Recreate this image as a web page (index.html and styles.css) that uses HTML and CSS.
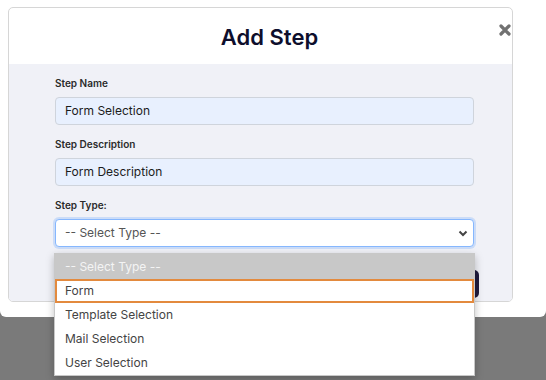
FILE: index.html
```html
<!DOCTYPE html>
<html lang="en">
<head>
    <meta charset="UTF-8">
    <meta name="viewport" content="width=device-width, initial-scale=1.0">
    <title>Add Step</title>
    <link rel="stylesheet" href="styles.css">
</head>
<body>
    <div class="modal">
        <div class="card">
            <div class="card-header">
                <h2>Add Step</h2>
                <span class="close">
                    <svg width="12" height="12" viewBox="0 0 12 12"><path d="M2 2 L10 10 M10 2 L2 10" stroke="#717171" stroke-width="3.2" stroke-linecap="round"/></svg>
                </span>
            </div>
            <div class="card-body">
                <label>Step Name</label>
                <div class="input filled">Form Selection</div>

                <label>Step Description</label>
                <div class="input filled">Form Description</div>

                <label>Step Type:</label>
                <div class="select-wrap">
                    <div class="input select">
                        <span>-- Select Type --</span>
                        <svg width="10" height="7" viewBox="0 0 10 7"><path d="M1.5 1.5 L5 5 L8.5 1.5" fill="none" stroke="#444" stroke-width="2"/></svg>
                    </div>
                    <ul class="options">
                        <li class="placeholder">-- Select Type --</li>
                        <li class="active">Form</li>
                        <li>Template Selection</li>
                        <li>Mail Selection</li>
                        <li>User Selection</li>
                    </ul>
                </div>

                <div class="footer">
                    <button class="save-btn">Save</button>
                </div>
            </div>
        </div>
    </div>
</body>
</html>
```

FILE: styles.css
```css
* { margin: 0; padding: 0; box-sizing: border-box; }
html { background: #7a7a7a; }
body {
    font-family: Inter, "Noto Sans", sans-serif;
    background: #7a7a7a;
    color: #222;
    min-height: 100vh;
    height: 380px;
}
.modal {
    background: #fff;
    height: 317px;
    padding: 7px 33px 0 8px;
    border-radius: 0 0 6px 6px;
    position: relative;
    z-index: 1;
}
.card {
    border: 1px solid #d6d6d6;
    border-radius: 5px;
    height: 295px;
    display: flex;
    flex-direction: column;
}
.card-header {
    height: 56px;
    display: flex;
    align-items: center;
    justify-content: center;
    padding-left: 18px;
    position: relative;
}
.card-header h2 {
    font-size: 22px;
    font-weight: 600;
    color: #0e0e2c;
    margin-top: 1px;
}
.close {
    position: absolute;
    right: -1px;
    top: 16px;
    width: 14px;
    height: 14px;
}
.close svg { display: block; }
.card-body {
    flex: 1;
    background: #f0f1f7;
    border-radius: 0 0 4px 4px;
    padding: 13px 38px 0 46px;
    display: flex;
    flex-direction: column;
}
label {
    font-size: 10px;
    font-weight: 600;
    color: #2b2b2b;
    line-height: 13px;
    margin-bottom: 7px;
}
.input {
    height: 28px;
    border: 1px solid #cfd4dc;
    border-radius: 4px;
    font-size: 12px;
    line-height: 26px;
    padding: 0 9px;
    margin-bottom: 13px;
}
.filled { background: #e8f0fe; color: #1c1c1c; }
.select-wrap { position: relative; }
.select {
    background: #fff;
    color: #555;
    border-color: #86b7fe;
    box-shadow: 0 0 0 2px rgba(13, 110, 253, 0.16);
    display: flex;
    justify-content: space-between;
    align-items: center;
    padding-right: 5px;
}
.options {
    position: absolute;
    top: 34px;
    left: -1px;
    right: -1px;
    list-style: none;
    background: #fff;
    border: 1px solid #c8c8c8;
    box-shadow: 0 3px 8px rgba(0, 0, 0, 0.25);
    font-size: 12px;
    color: #444;
    z-index: 2;
}
.options li {
    height: 24px;
    line-height: 24px;
    padding-left: 10px;
}
.options .placeholder {
    height: 25px;
    line-height: 25px;
    background: #c8c8c8;
    color: #f4f4f4;
}
.options .active {
    border: 2px solid #e38a3e;
    line-height: 20px;
    padding-left: 8px;
}
.footer {
    display: flex;
    justify-content: flex-end;
    margin-top: 10px;
    margin-right: -5px;
}
.save-btn {
    background: #1f1a3d;
    color: #fff;
    border: none;
    border-radius: 5px;
    height: 28px;
    padding: 0 16px;
    font-family: inherit;
    font-size: 12px;
}
```
